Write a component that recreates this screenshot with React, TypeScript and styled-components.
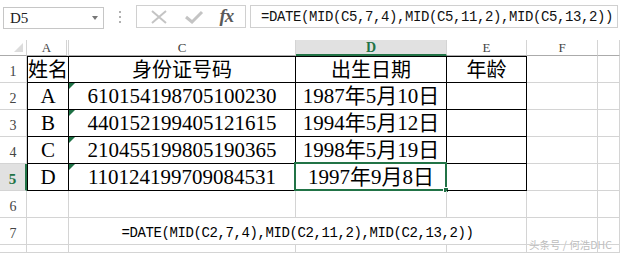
import styled, { createGlobalStyle } from "styled-components";

const Global = createGlobalStyle`
  body { margin: 0; background: #fff; }
  * { box-sizing: border-box; }
`;

const GRID = "#d4d4d4";
const INK = "#000";
const GREEN = "#217346";

const Page = styled.div`
  position: relative;
  width: 620px;
  height: 253px;
  overflow: hidden;
  background: #fff;
`;

const FormulaBar = styled.div`
  height: 40px;
  display: flex;
  align-items: flex-start;
  padding-top: 5px;
`;

const NameBox = styled.div`
  margin: 2px 0 0 3px;
  width: 101px;
  height: 22px;
  border: 1px solid #c6c6c6;
  display: flex;
  align-items: center;
  justify-content: space-between;
  padding: 0 5px 0 6px;
  font: 15px "Liberation Serif", serif;
  color: #222;
`;

const Arrow = styled.span`
  width: 0;
  height: 0;
  border-left: 3px solid transparent;
  border-right: 3px solid transparent;
  border-top: 4px solid #777;
`;

const Grip = styled.div`
  width: 32px;
  height: 24px;
  display: flex;
  flex-direction: column;
  align-items: center;
  justify-content: center;
  gap: 3px;
  span {
    width: 2px;
    height: 2px;
    background: #b0b0b0;
  }
`;

const Buttons = styled.div`
  width: 110px;
  height: 23px;
  border: 1px solid #d0d0d0;
  display: flex;
  align-items: center;
  justify-content: space-around;
  padding: 0 4px;
`;

const Fx = styled.span`
  font: italic bold 19px "Liberation Serif", serif;
  color: #5a5a5a;
  letter-spacing: -1px;
  margin-top: -2px;
`;

const FormulaInput = styled.div`
  margin-left: 4px;
  flex: 1;
  height: 23px;
  margin-right: 2px;
  border: 1px solid #d0d0d0;
  display: flex;
  align-items: center;
  padding: 1px 0 0 10px;
  font: 14px "Liberation Mono", monospace;
  letter-spacing: -0.4px;
  color: #111;
  white-space: nowrap;
`;

const Sheet = styled.div`
  display: grid;
  grid-template-columns: 27px 42px 227px 151px 80px 71px 1fr;
  grid-template-rows: 16px repeat(7, 27px) 1fr;
  height: 213px;
`;

const Corner = styled.div`
  border-right: 1px solid ${GRID};
  border-bottom: 1px solid #ababab;
  display: flex;
  align-items: flex-end;
  justify-content: flex-end;
  padding: 0 3px 3px 0;
  &::after {
    content: "";
    width: 0;
    height: 0;
    border-left: 9px solid transparent;
    border-bottom: 9px solid #dcdcdc;
  }
`;

const ColHead = styled.div<{ $active?: boolean; $double?: boolean }>`
  display: flex;
  align-items: center;
  justify-content: center;
  font: ${({ $active }) => ($active ? "bold 14px" : "13px")} "Liberation Serif", serif;
  line-height: 14px;
  color: ${({ $active }) => ($active ? GREEN : "#444")};
  background: ${({ $active }) => ($active ? "#e1e1e1" : "#fff")};
  border-right: ${({ $double }) => ($double ? `3px double ${GRID}` : `1px solid ${GRID}`)};
  border-bottom: ${({ $active }) => ($active ? `2px solid ${GREEN}` : "1px solid #ababab")};
  padding-top: 1px;
`;

const RowHead = styled.div<{ $active?: boolean }>`
  display: flex;
  align-items: flex-end;
  justify-content: center;
  padding-bottom: 2px;
  font: ${({ $active }) => ($active ? "bold 15px" : "14px")} "Liberation Serif", serif;
  color: ${({ $active }) => ($active ? GREEN : "#444")};
  background: ${({ $active }) => ($active ? "#e1e1e1" : "#fff")};
  border-right: ${({ $active }) => ($active ? `2px solid ${GREEN}` : `1px solid ${GRID}`)};
  border-bottom: 1px solid ${GRID};
`;

const Cell = styled.div<{ $table?: boolean; $top?: boolean; $left?: boolean; $span?: number }>`
  position: relative;
  display: flex;
  align-items: flex-end;
  justify-content: center;
  padding-bottom: 2px;
  white-space: nowrap;
  font: 21px "Liberation Serif", "Noto Sans CJK SC", serif;
  line-height: 22px;
  color: #000;
  grid-column: ${({ $span }) => ($span ? `span ${$span}` : "auto")};
  border-right: 1px solid ${({ $table }) => ($table ? INK : GRID)};
  border-bottom: 1px solid ${({ $table }) => ($table ? INK : GRID)};
  border-top: ${({ $top }) => ($top ? `1px solid ${INK}` : "none")};
  border-left: ${({ $left }) => ($left ? `1px solid ${INK}` : "none")};
`;

const CjkText = styled.span`
  display: block;
  font-family: "Noto Sans CJK SC", sans-serif;
  font-size: 20px;
  line-height: 20px;
  padding-bottom: 1px;
`;

const Note = styled.span`
  font: 14px "Liberation Mono", monospace;
  letter-spacing: -0.4px;
  line-height: 16px;
  padding-bottom: 1px;
`;

const TextFlag = styled.span`
  position: absolute;
  left: 0;
  top: 0;
  width: 0;
  height: 0;
  border-top: 6px solid #1e7145;
  border-right: 6px solid transparent;
`;

const Selection = styled.span`
  position: absolute;
  inset: -2px -1px -1px -2px;
  border: 2px solid ${GREEN};
  pointer-events: none;
`;

const FillHandle = styled.span`
  position: absolute;
  right: -4px;
  bottom: -4px;
  width: 6px;
  height: 6px;
  background: ${GREEN};
  border: 1px solid #fff;
`;

const Watermark = styled.div`
  position: absolute;
  left: 529px;
  top: 239px;
  font: 10.5px "Noto Sans CJK SC", sans-serif;
  line-height: 12px;
  color: #bdbdbd;
  text-shadow: 0 0 1px #fff;
  white-space: nowrap;
`;

const rows = [
  { name: "姓名", id: "身份证号码", date: "出生日期", age: "年龄", head: true },
  { name: "A", id: "610154198705100230", date: "1987年5月10日" },
  { name: "B", id: "440152199405121615", date: "1994年5月12日" },
  { name: "C", id: "210455199805190365", date: "1998年5月19日" },
  { name: "D", id: "110124199709084531", date: "1997年9月8日" },
];

function App() {
  return (
    <Page>
      <Global />
      <FormulaBar>
        <NameBox>
          D5
          <Arrow />
        </NameBox>
        <Grip>
          <span />
          <span />
          <span />
        </Grip>
        <Buttons>
          <svg width="20" height="14" viewBox="0 0 20 14">
            <path d="M3 1 L17 13 M17 1 L3 13" stroke="#c4c4c4" strokeWidth="2" fill="none" />
          </svg>
          <svg width="20" height="14" viewBox="0 0 20 14">
            <path d="M2 7 L8 12 L18 2" stroke="#c4c4c4" strokeWidth="3" fill="none" />
          </svg>
          <Fx>fx</Fx>
        </Buttons>
        <FormulaInput>=DATE(MID(C5,7,4),MID(C5,11,2),MID(C5,13,2))</FormulaInput>
      </FormulaBar>

      <Sheet>
        <Corner />
        <ColHead $double>A</ColHead>
        <ColHead>C</ColHead>
        <ColHead $active>D</ColHead>
        <ColHead>E</ColHead>
        <ColHead>F</ColHead>
        <ColHead />

        {rows.map((r, i) => (
          <>
            <RowHead key={"h" + i} $active={i === 4}>{i + 1}</RowHead>
            <Cell key={"a" + i} $table $left $top={i === 0}>
              {r.head ? <CjkText>{r.name}</CjkText> : r.name}
            </Cell>
            <Cell key={"c" + i} $table $top={i === 0}>
              {!r.head && <TextFlag />}
              {r.head ? <CjkText>{r.id}</CjkText> : r.id}
            </Cell>
            <Cell key={"d" + i} $table $top={i === 0}>
              {r.head ? <CjkText>{r.date}</CjkText> : r.date}
              {i === 4 && (
                <Selection>
                  <FillHandle />
                </Selection>
              )}
            </Cell>
            <Cell key={"e" + i} $table $top={i === 0}>
              {r.age && <CjkText>{r.age}</CjkText>}
            </Cell>
            <Cell key={"f" + i} />
            <Cell key={"g" + i} />
          </>
        ))}

        <RowHead>6</RowHead>
        <Cell />
        <Cell />
        <Cell />
        <Cell />
        <Cell />
        <Cell />

        <RowHead>7</RowHead>
        <Cell />
        <Cell $span={3}>
          <Note>=DATE(MID(C2,7,4),MID(C2,11,2),MID(C2,13,2))</Note>
        </Cell>
        <Cell />
        <Cell />

        <RowHead />
        <Cell />
        <Cell />
        <Cell />
        <Cell />
        <Cell />
        <Cell />
      </Sheet>
      <Watermark>头条号 / 何浩DHC</Watermark>
    </Page>
  );
}

export default App;
